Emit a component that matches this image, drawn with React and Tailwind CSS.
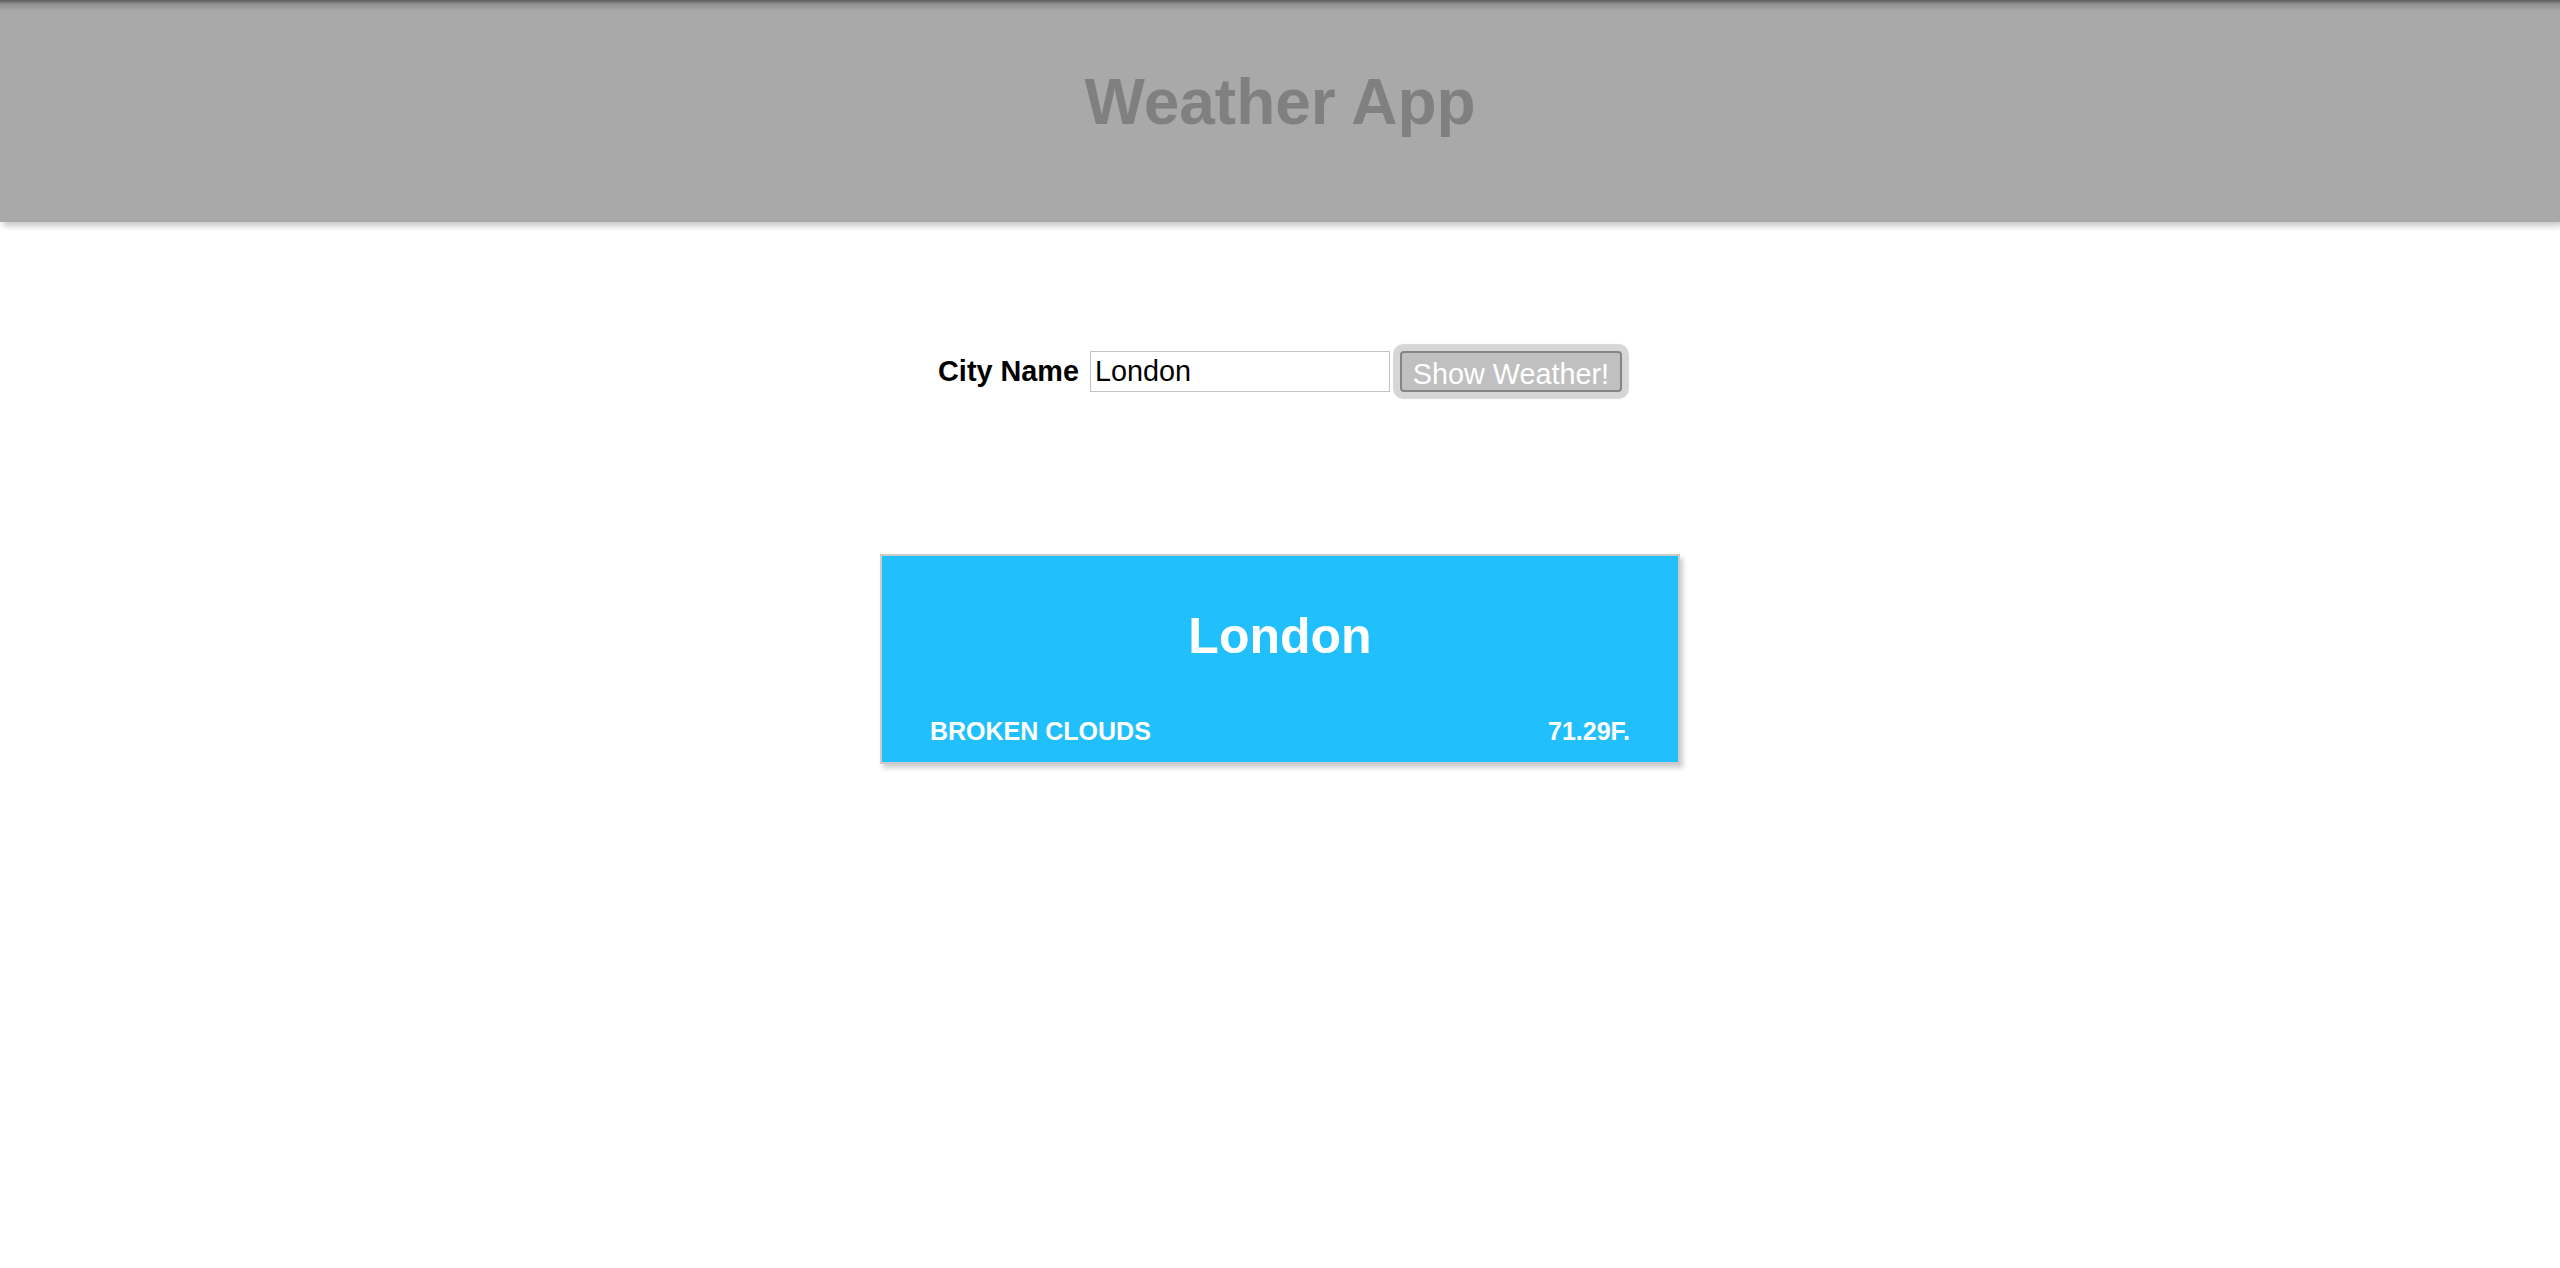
import { useState } from 'react'

function App() {
  const [city, setCity] = useState('London')

  return (
    <div className="min-h-screen bg-white font-['Liberation_Sans',Arial,sans-serif]">
      {/* Cabeçalho */}
      <header className="h-[222px] bg-[linear-gradient(to_bottom,#5c5c5c_0px,#8f8f8f_4px,#a9a9a9_11px)] pt-[70px] shadow-[3px_4px_6px_rgba(0,0,0,0.22)]">
        <h1 className="text-center text-[64px] leading-none font-bold text-[#808080]">
          Weather App
        </h1>
      </header>

      {/* Formulário */}
      <div className="mt-[129px] flex h-[41px] items-center justify-center">
        <label className="mr-[11px] text-[28.8px] font-bold text-black">City Name</label>
        <input
          value={city}
          onChange={(e) => setCity(e.target.value)}
          className="h-[41px] w-[300px] border border-[#c3c3c3] px-[4px] text-[28.8px] text-black outline-none"
        />
        <button className="ml-[10px] h-[41px] w-[222px] rounded-[4px] border-2 border-[#858585] bg-[#c0c0c0] text-[28.8px] text-white shadow-[0_0_1px_7px_#d6d6d6]">
          Show Weather!
        </button>
      </div>

      {/* Cartão do tempo */}
      <div className="mx-auto mt-[162px] w-[800px] border-2 border-[#cbcbcb] bg-[#22bffd] shadow-[3px_4px_5px_rgba(0,0,0,0.2)]">
        <div className="flex h-[206px] flex-col px-[48px] pt-[55px] pb-[18px] text-white">
          <h2 className="text-center text-[50px] leading-none font-bold">London</h2>
          <div className="mt-auto flex items-center justify-between text-[25px] leading-none font-bold uppercase">
            <span>broken clouds</span>
            <span>71.29F.</span>
          </div>
        </div>
      </div>
    </div>
  )
}

export default App
